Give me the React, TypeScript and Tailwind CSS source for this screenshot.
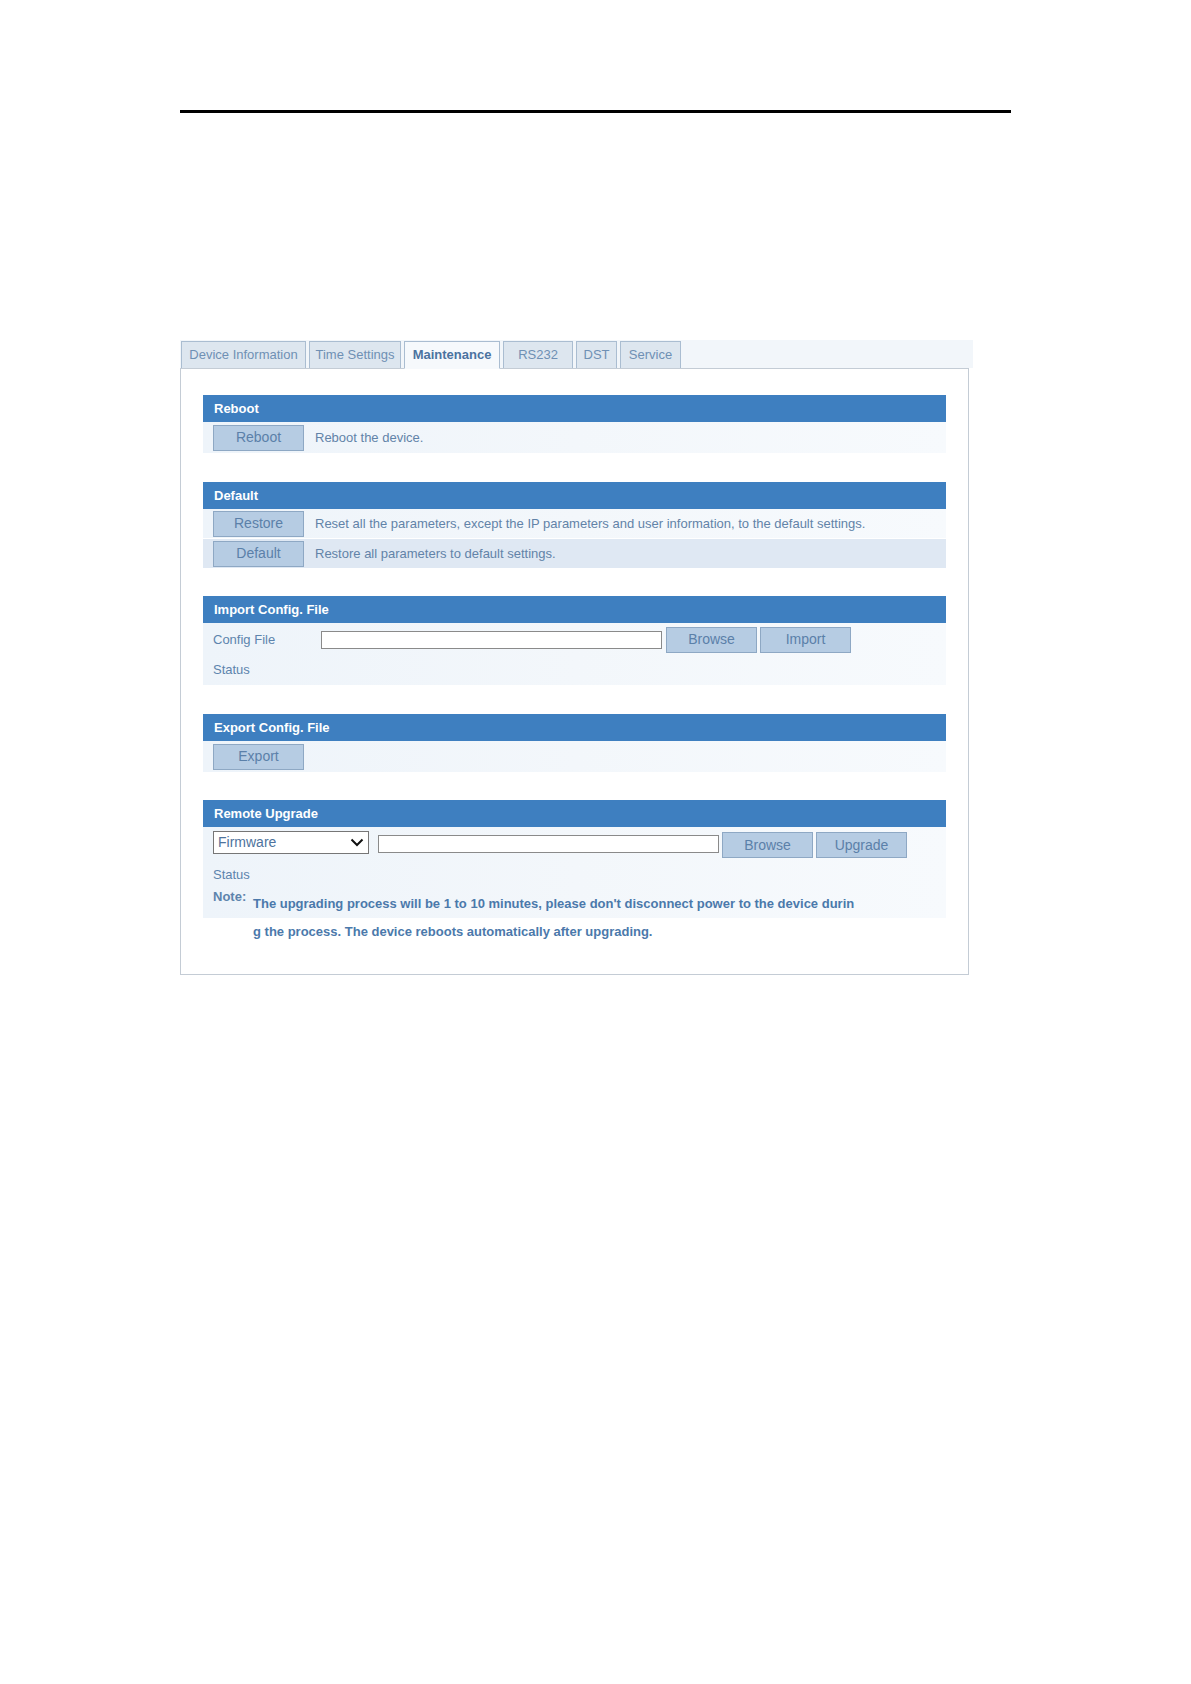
import React from 'react';

const font = { fontFamily: '"Liberation Sans", Arial, sans-serif' };

const tabs = [
  { label: 'Device Information', w: 'w-[125px]' },
  { label: 'Time Settings', w: 'w-[92px]' },
  { label: 'Maintenance', w: 'w-[96px]', active: true },
  { label: 'RS232', w: 'w-[70px]' },
  { label: 'DST', w: 'w-[41px]' },
  { label: 'Service', w: 'w-[61px]' },
];

const Btn: React.FC<{ children: React.ReactNode; className?: string }> = ({ children, className = '' }) => (
  <div
    className={`w-[91px] h-[26px] shrink-0 flex items-center justify-center bg-[#b6cce3] border border-[#8ea8c4] text-[14px] text-[#5b80a9] ${className}`}
  >
    {children}
  </div>
);

const Header: React.FC<{ title: string }> = ({ title }) => (
  <div className="h-[27px] bg-[#3e7fc0] flex items-center pl-[11px] text-[13px] font-bold text-white">
    {title}
  </div>
);

const rowBg = 'bg-gradient-to-r from-[#eef4fa] via-[#f3f7fb] to-[#f7fafd]';

const App: React.FC = () => {
  return (
    <div className="w-[1191px] h-[1684px] bg-white" style={font}>
      {/* top rule */}
      <div className="pt-[110px] pl-[180px]">
        <div className="w-[831px] h-[3px] bg-black" />
      </div>

      <div className="ml-[180px] mt-[227px] w-[793px]">
        {/* tabs */}
        <div className="h-[28px] bg-[#f2f6fa] flex items-end gap-[3px] pl-[1px] relative">
          {tabs.map((t) => (
            <div
              key={t.label}
              className={`${t.w} h-[27px] flex items-center justify-center text-[13px] border border-[#aabdd1] ${
                t.active
                  ? 'bg-[#f6f9fc] border-b-[#f6f9fc] font-bold text-[#4b73a0] relative z-10 mb-[-1px] h-[28px]'
                  : 'bg-[#dde6ef] text-[#6f90b4] border-b-0'
              }`}
            >
              {t.label}
            </div>
          ))}
        </div>

        {/* panel */}
        <div className="w-[789px] border border-[#c4ccd5] bg-white pt-[26px] pb-[28px] pl-[22px] pr-[22px] text-[13px] text-[#6283a8]">
          {/* Reboot */}
          <Header title="Reboot" />
          <div className={`h-[31px] flex items-center pl-[10px] ${rowBg}`}>
            <Btn>Reboot</Btn>
            <span className="ml-[11px]">Reboot the device.</span>
          </div>

          {/* Default */}
          <div className="mt-[29px]">
            <Header title="Default" />
            <div className={`h-[29px] flex items-center pl-[10px] ${rowBg}`}>
              <Btn className="h-[25px]">Restore</Btn>
              <span className="ml-[11px]">
                Reset all the parameters, except the IP parameters and user information, to the default settings.
              </span>
            </div>
            <div className="h-[29px] flex items-center pl-[10px] bg-[#dfe8f3] mt-[1px]">
              <Btn className="h-[25px]">Default</Btn>
              <span className="ml-[11px]">Restore all parameters to default settings.</span>
            </div>
          </div>

          {/* Import */}
          <div className="mt-[28px]">
            <Header title="Import Config. File" />
            <div className={rowBg}>
              <div className="h-[31px] flex items-center pt-[2px] pl-[10px]">
                <span className="w-[108px] shrink-0 text-[#5d84ad]">Config File</span>
                <div className="w-[341px] h-[18px] bg-white border border-[#8a8a8a]" />
                <Btn className="ml-[4px]">Browse</Btn>
                <Btn className="ml-[3px]">Import</Btn>
              </div>
              <div className="h-[31px] flex items-center pl-[10px] text-[#5d84ad]">Status</div>
            </div>
          </div>

          {/* Export */}
          <div className="mt-[29px]">
            <Header title="Export Config. File" />
            <div className={`h-[31px] flex items-center pl-[10px] ${rowBg}`}>
              <Btn>Export</Btn>
            </div>
          </div>

          {/* Remote upgrade */}
          <div className="mt-[28px]">
            <Header title="Remote Upgrade" />
            <div className={rowBg}>
              <div className="h-[32px] flex items-start pl-[10px]">
                <div className="w-[156px] h-[23px] shrink-0 mt-[4px] bg-white border border-[#767676] flex items-center justify-between pl-[4px] pr-[4px] text-[14px] text-[#4e739d]">
                  <span>Firmware</span>
                  <svg width="14" height="9" viewBox="0 0 14 9">
                    <path d="M1.5 1.5 L7 7 L12.5 1.5" fill="none" stroke="#111" strokeWidth="2" />
                  </svg>
                </div>
                <div className="w-[341px] h-[18px] shrink-0 bg-white border border-[#8a8a8a] ml-[9px] mt-[8px]" />
                <Btn className="ml-[3px] mt-[5px]">Browse</Btn>
                <Btn className="ml-[3px] mt-[5px]">Upgrade</Btn>
              </div>
              <div className="h-[26px] flex items-end pb-[1px] pl-[10px] text-[#5d84ad]">Status</div>
              <div className="flex pl-[10px] pt-[4px] font-bold text-[#4b79ab]">
                <span className="w-[40px] shrink-0 text-[#5d84ad] -mt-[2px]">Note:</span>
                <div className="leading-[28px] mt-[1px]">
                  The upgrading process will be 1 to 10 minutes, please don't disconnect power to the device durin
                </div>
              </div>
            </div>
            <div className="pl-[50px] leading-[28px] font-bold text-[#4b79ab]">
              g the process. The device reboots automatically after upgrading.
            </div>
          </div>
        </div>
      </div>
    </div>
  );
};

export default App;
